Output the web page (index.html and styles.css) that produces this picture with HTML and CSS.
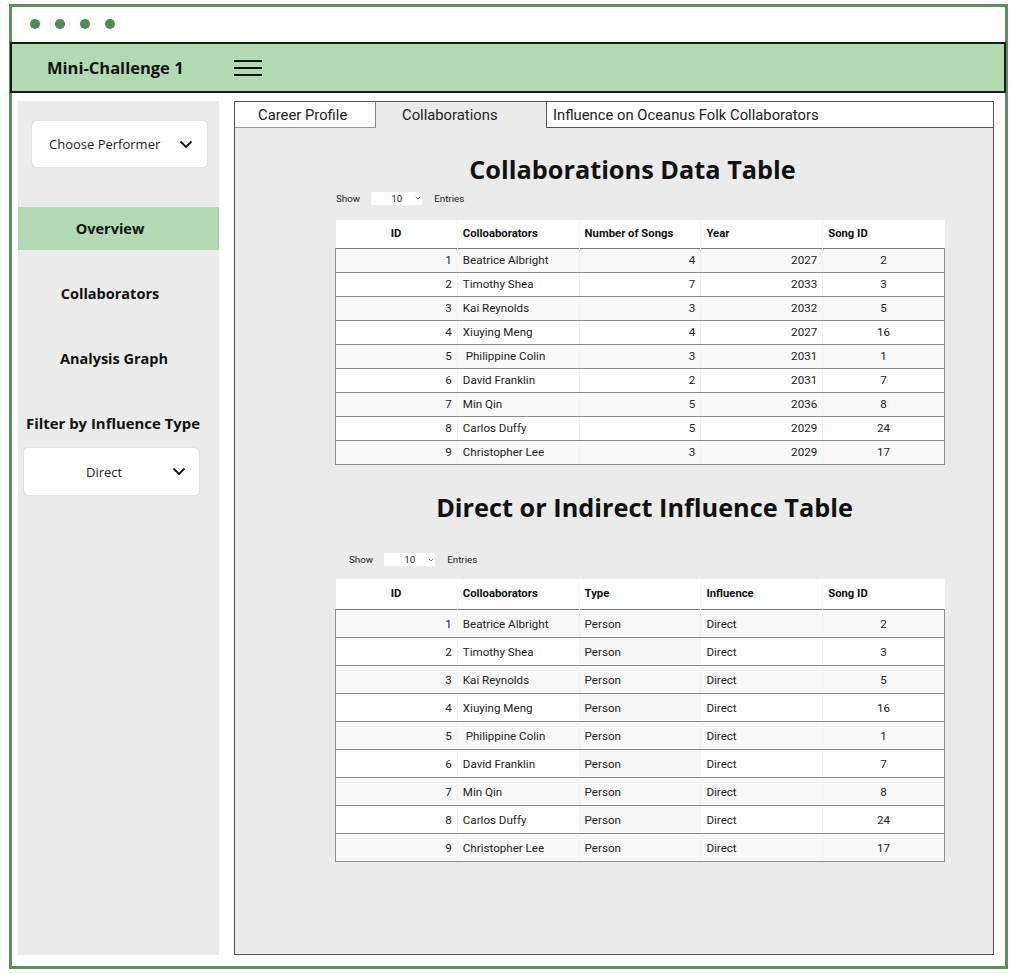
FILE: index.html
```html
<!DOCTYPE html>
<html>
<head>
<meta charset="utf-8">
<link rel="stylesheet" href="styles.css">
</head>
<body>
<div class="frame">
  <div class="dots"><span></span><span></span><span></span><span></span></div>
  <header class="topbar">
    <div class="app-title">Mini-Challenge 1</div>
    <div class="burger"><i></i><i></i><i></i></div>
  </header>
  <div class="main">
    <aside class="sidebar">
      <div class="select performer">
        <span>Choose Performer</span>
        <svg width="14" height="9" viewBox="0 0 14 9"><polyline points="1.5,1.5 7,7 12.5,1.5" fill="none" stroke="#111" stroke-width="1.8"/></svg>
      </div>
      <div class="nav active">Overview</div>
      <div class="nav">Collaborators</div>
      <div class="nav graph">Analysis Graph</div>
      <div class="filter-label">Filter by Influence Type</div>
      <div class="select influence">
        <span>Direct</span>
        <svg width="14" height="9" viewBox="0 0 14 9"><polyline points="1.5,1.5 7,7 12.5,1.5" fill="none" stroke="#111" stroke-width="1.8"/></svg>
      </div>
    </aside>
    <section class="panel">
      <div class="tabs">
        <div class="tab tab-career">Career Profile</div>
        <div class="tab tab-collab active">Collaborations</div>
        <div class="tab tab-influence">Influence on Oceanus Folk Collaborators</div>
      </div>
      <div class="content">
        <h1 class="heading h-first">Collaborations Data Table</h1>
        <div class="show-row">
          <span>Show</span>
          <span class="entries-select"><span>10</span><svg width="6" height="4" viewBox="0 0 6 4"><polyline points="0.8,0.8 3,3 5.2,0.8" fill="none" stroke="#666" stroke-width="0.9"/></svg></span>
          <span>Entries</span>
        </div>
        <table class="dt dt-collab">
          <thead>
            <tr><th class="c-id">ID</th><th>Colloaborators</th><th>Number of Songs</th><th>Year</th><th>Song ID</th></tr>
          </thead>
          <tbody>
            <tr><td class="r">1</td><td>Beatrice Albright</td><td class="r">4</td><td class="r">2027</td><td class="c">2</td></tr>
            <tr><td class="r">2</td><td>Timothy Shea</td><td class="r">7</td><td class="r">2033</td><td class="c">3</td></tr>
            <tr><td class="r">3</td><td>Kai Reynolds</td><td class="r">3</td><td class="r">2032</td><td class="c">5</td></tr>
            <tr><td class="r">4</td><td>Xiuying Meng</td><td class="r">4</td><td class="r">2027</td><td class="c">16</td></tr>
            <tr><td class="r">5</td><td>&nbsp;Philippine Colin</td><td class="r">3</td><td class="r">2031</td><td class="c">1</td></tr>
            <tr><td class="r">6</td><td>David Franklin</td><td class="r">2</td><td class="r">2031</td><td class="c">7</td></tr>
            <tr><td class="r">7</td><td>Min Qin</td><td class="r">5</td><td class="r">2036</td><td class="c">8</td></tr>
            <tr><td class="r">8</td><td>Carlos Duffy</td><td class="r">5</td><td class="r">2029</td><td class="c">24</td></tr>
            <tr><td class="r">9</td><td>Christopher Lee</td><td class="r">3</td><td class="r">2029</td><td class="c">17</td></tr>
          </tbody>
        </table>

        <h1 class="heading h-second">Direct or Indirect Influence Table</h1>
        <div class="show-row show-second">
          <span>Show</span>
          <span class="entries-select"><span>10</span><svg width="6" height="4" viewBox="0 0 6 4"><polyline points="0.8,0.8 3,3 5.2,0.8" fill="none" stroke="#666" stroke-width="0.9"/></svg></span>
          <span>Entries</span>
        </div>
        <table class="dt dt-influence">
          <thead>
            <tr><th class="c-id">ID</th><th>Colloaborators</th><th>Type</th><th>Influence</th><th>Song ID</th></tr>
          </thead>
          <tbody>
            <tr><td class="r">1</td><td>Beatrice Albright</td><td class="type">Person</td><td>Direct</td><td class="c">2</td></tr>
            <tr><td class="r">2</td><td>Timothy Shea</td><td class="type">Person</td><td>Direct</td><td class="c">3</td></tr>
            <tr><td class="r">3</td><td>Kai Reynolds</td><td class="type">Person</td><td>Direct</td><td class="c">5</td></tr>
            <tr><td class="r">4</td><td>Xiuying Meng</td><td class="type">Person</td><td>Direct</td><td class="c">16</td></tr>
            <tr><td class="r">5</td><td>&nbsp;Philippine Colin</td><td class="type">Person</td><td>Direct</td><td class="c">1</td></tr>
            <tr><td class="r">6</td><td>David Franklin</td><td class="type">Person</td><td>Direct</td><td class="c">7</td></tr>
            <tr><td class="r">7</td><td>Min Qin</td><td class="type">Person</td><td>Direct</td><td class="c">8</td></tr>
            <tr><td class="r">8</td><td>Carlos Duffy</td><td class="type">Person</td><td>Direct</td><td class="c">24</td></tr>
            <tr><td class="r">9</td><td>Christopher Lee</td><td class="type">Person</td><td>Direct</td><td class="c">17</td></tr>
          </tbody>
        </table>
      </div>
    </section>
  </div>
</div>
</body>
</html>
```

FILE: styles.css
```css
* { box-sizing: border-box; }
html, body { margin: 0; padding: 0; background: #fff; }
body {
  font-family: "Open Sans", "Liberation Sans", sans-serif;
  color: #111;
}
.frame {
  margin: 4px 0 0 9px;
  width: 999px;
  height: 965px;
  border: 3px solid #5b8f5b;
  background: #fff;
  display: flex;
  flex-direction: column;
}
.dots {
  height: 35px;
  display: flex;
  align-items: center;
  gap: 15px;
  padding-left: 18px;
  padding-bottom: 2px;
}
.dots span {
  width: 10px;
  height: 10px;
  border-radius: 50%;
  background: #4f8a55;
}
.topbar {
  height: 51px;
  margin: 0 -1px 0 -2px;
  background: #b1dab3;
  border: 2px solid #1a1a1a;
  display: flex;
  align-items: center;
  padding-left: 35px;
}
.app-title {
  font-size: 16.5px;
  font-weight: 700;
  width: 187px;
}
.burger {
  width: 28px;
  display: flex;
  flex-direction: column;
  gap: 5px;
  margin-top: 1px;
}
.burger i {
  display: block;
  height: 2px;
  background: #111;
}
.main {
  flex: 1;
  display: flex;
  gap: 15px;
  padding: 8px 11px 11px 6px;
}
.sidebar {
  width: 201px;
  background: #ebebeb;
  display: flex;
  flex-direction: column;
  align-items: center;
  padding-top: 20px;
}
.select {
  background: #fff;
  border-radius: 4px;
  box-shadow: 0 0 1px rgba(0,0,0,0.35);
  display: flex;
  align-items: center;
  font-size: 13px;
  color: #222;
}
.performer {
  width: 175px;
  height: 46px;
  padding: 0 14px 0 17px;
  justify-content: space-between;
  margin-left: 2px;
}
.nav {
  align-self: stretch;
  text-align: center;
  font-weight: 700;
  font-size: 14.5px;
  height: 43px;
  line-height: 43px;
  padding-right: 17px;
}
.nav.active {
  background: #b1dab3;
  margin-top: 40px;
}
.nav + .nav { margin-top: 22px; }
.nav.graph { padding-right: 9px; }
.filter-label {
  font-weight: 700;
  font-size: 14.9px;
  margin-top: 32px;
  height: 23px;
  line-height: 23px;
  padding-right: 11px;
}
.influence {
  width: 175px;
  height: 47px;
  margin-top: 13px;
  margin-right: 14px;
  padding: 0 13px 0 62px;
  justify-content: space-between;
}
.panel {
  width: 760px;
  border: 1px solid #555;
  border-top: none;
  background: #ebebeb;
  display: flex;
  flex-direction: column;
}
.tabs {
  display: flex;
  height: 27px;
  font-family: "Roboto", "Liberation Sans", sans-serif;
  font-size: 14.8px;
  color: #222;
}
.tab {
  height: 27px;
  line-height: 27px;
  border-top: 1px solid #555;
  background: #fff;
}
.tab-career {
  width: 141px;
  border-bottom: 1px solid #999;
  border-right: 1px solid #888;
  padding-left: 23px;
}
.tab-collab {
  width: 170px;
  background: #ebebeb;
  padding-left: 26px;
}
.tab-influence {
  flex: 1;
  border-left: 1px solid #555;
  border-bottom: 1px solid #555;
  padding-left: 6px;
}
.content {
  padding-left: 100px;
  width: 711px;
}
.heading {
  margin: 0;
  text-align: center;
  font-size: 25.3px;
  font-weight: 700;
  line-height: 34px;
}
.h-first { margin-top: 24px; padding-right: 16px; }
.h-second { margin-top: 25px; padding-left: 8px; }
.show-row {
  display: flex;
  align-items: center;
  font-family: "Roboto", "Liberation Sans", sans-serif;
  font-size: 9.8px;
  color: #222;
  height: 14px;
  margin-top: 5px;
  padding-left: 1px;
}
.show-second { margin-top: 29px; padding-left: 14px; }
.entries-select {
  background: #fff;
  width: 51px;
  height: 13px;
  margin: 0 12px 0 11px;
  display: flex;
  align-items: center;
  padding-left: 20px;
  gap: 13px;
}
.dt {
  border-collapse: collapse;
  width: 610px;
  table-layout: fixed;
  font-family: "Roboto", "Liberation Sans", sans-serif;
  font-size: 11.6px;
  color: #222;
}
.dt-collab { margin-top: 15px; }
.dt-influence { margin-top: 12px; }
.dt th {
  background: #fff;
  text-align: left;
  font-weight: 700;
  font-size: 11.3px;
  height: 28px;
  padding: 0 5px;
  border-left: 1px solid #f4f4f4;
  color: #111;
}
.dt-influence th { height: 31px; }
.dt th.c-id { text-align: center; border-left: none; }
.dt td {
  height: 24px;
  padding: 0 5px;
  border-top: 1px solid #8c8c8c;
  border-bottom: 1px solid #8c8c8c;
  border-left: 1px solid #f1f1f1;
}
.dt-influence td { height: 28px; }
.dt td:first-child { border-left: 1px solid #8c8c8c; }
.dt td:last-child { border-right: 1px solid #8c8c8c; }
.dt tbody tr:nth-child(odd) td { background: #f8f8f8; }
.dt tbody tr:nth-child(even) td { background: #fff; }
.dt-influence tbody tr:nth-child(even) td.type { background: #f6f6f6; }
.dt tbody tr:first-child td { border-top: 1px solid #777; }
.dt td.r { text-align: right; }
.dt td.c { text-align: center; }
```
